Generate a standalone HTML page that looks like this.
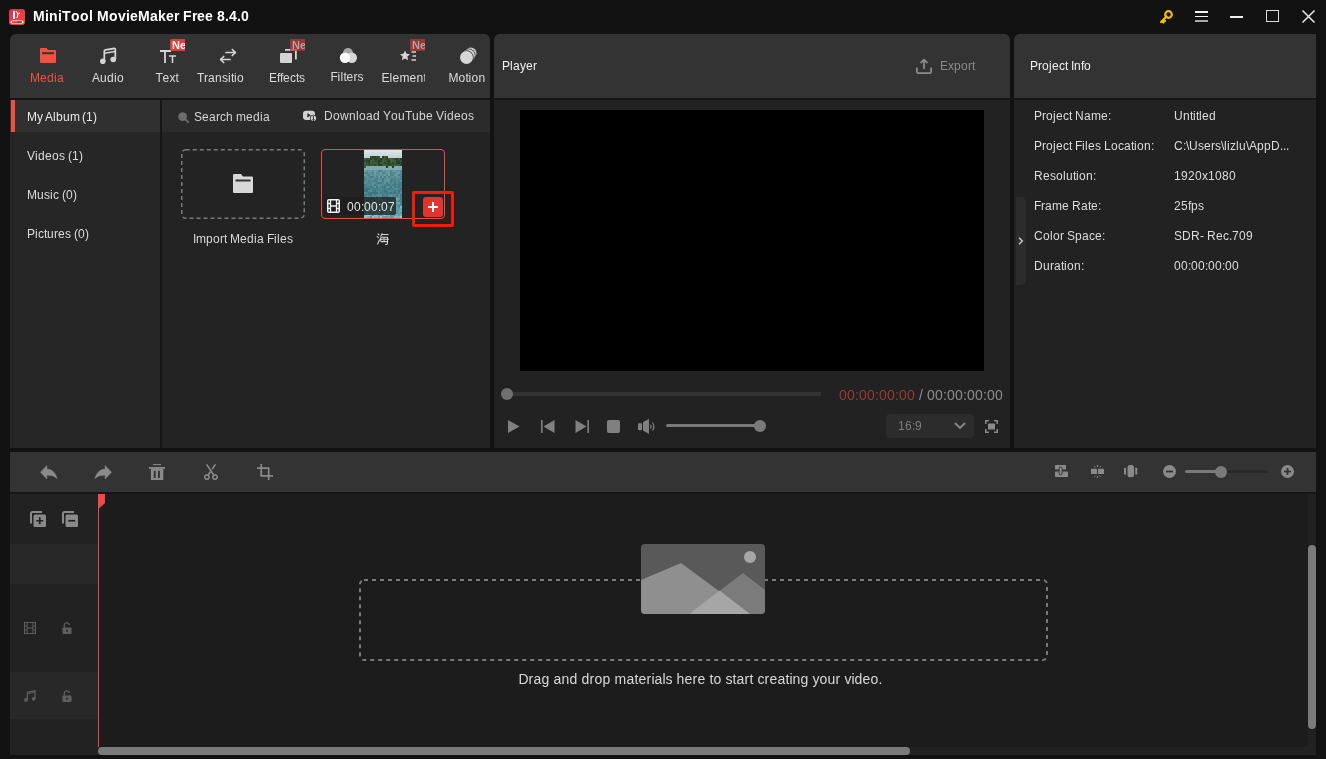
<!DOCTYPE html>
<html><head><meta charset="utf-8">
<style>
*{margin:0;padding:0;box-sizing:border-box}
html,body{width:1326px;height:759px;overflow:hidden;background:#121212;font-family:"Liberation Sans",sans-serif;}
.a{position:absolute}
.t{position:absolute;white-space:nowrap;font-size:12px;line-height:12px;color:#dcdcdc;will-change:transform}
svg{position:absolute;overflow:visible}
.g i{display:inline-block;font-style:normal;text-align:left;overflow:visible}
</style></head><body>
<!-- TITLE BAR -->
<div class="a" style="left:0;top:0;width:1326px;height:34px;background:#121212"></div>
<svg style="left:9px;top:9px" width="16" height="16" viewBox="0 0 16 16">
  <defs><linearGradient id="lg" x1="0" y1="0" x2="1" y2="1"><stop offset="0" stop-color="#e42a5e"/><stop offset="1" stop-color="#e8502a"/></linearGradient></defs>
  <rect x="0" y="0" width="16" height="16" rx="3" fill="url(#lg)"/>
  <rect x="4" y="2" width="2" height="8" fill="#fff"/>
  <path d="M7 2 L9 5 L11 4 M9 5 L8 9" stroke="#fff" stroke-width="1" fill="none"/>
  <rect x="1.5" y="11.5" width="13" height="3" rx="1.5" fill="#fff"/>
  <rect x="3" y="12.3" width="5" height="1.5" fill="#e01818"/>
  <rect x="8" y="12.3" width="5" height="1.5" fill="#333"/>
</svg>
<div class="t g" id="title" style="left:33px;top:9px;font-size:14px;line-height:14px;font-weight:bold;color:#fff;letter-spacing:0.2px"><i style="width:12px">M</i><i style="width:4px">i</i><i style="width:9px">n</i><i style="width:4px">i</i><i style="width:9px">T</i><i style="width:9px">o</i><i style="width:9px">o</i><i style="width:4px">l</i><i style="width:4px">&nbsp;</i><i style="width:12px">M</i><i style="width:9px">o</i><i style="width:8px">v</i><i style="width:4px">i</i><i style="width:8px">e</i><i style="width:12px">M</i><i style="width:8px">a</i><i style="width:8px">k</i><i style="width:8px">e</i><i style="width:5px">r</i><i style="width:4px">&nbsp;</i><i style="width:9px">F</i><i style="width:5px">r</i><i style="width:8px">e</i><i style="width:8px">e</i><i style="width:4px">&nbsp;</i><i style="width:8px">8</i><i style="width:4px">.</i><i style="width:8px">4</i><i style="width:4px">.</i><i style="width:8px">0</i></div>
<!-- key -->
<svg style="left:1160px;top:10px" width="13" height="13" viewBox="0 0 13 13">
  <circle cx="8.5" cy="4.5" r="3.3" fill="none" stroke="#f5bd00" stroke-width="2.2"/>
  <path d="M6.5 6.5 L1 12 M2 11 L3.5 12.5 M3.5 9.5 L5 11" stroke="#f5bd00" stroke-width="2.2" fill="none" stroke-linecap="round"/>
</svg>
<!-- menu -->
<div class="a" style="left:1195px;top:11px;width:13px;height:1.6px;background:#f0f0f0"></div>
<div class="a" style="left:1195px;top:15.6px;width:13px;height:1.7px;background:#f0f0f0"></div>
<div class="a" style="left:1195px;top:20px;width:13px;height:2px;background:#a8a8a8"></div>
<!-- min -->
<div class="a" style="left:1230px;top:16px;width:13px;height:2px;background:#ececec"></div>
<!-- max -->
<div class="a" style="left:1266px;top:10px;width:13px;height:12px;border:1.5px solid #dcdcdc"></div>
<!-- close -->
<svg style="left:1302px;top:10px" width="13" height="13" viewBox="0 0 13 13">
  <path d="M0.5 0.5 L12.5 12.5 M12.5 0.5 L0.5 12.5" stroke="#e8e8e8" stroke-width="1.5"/>
</svg>

<!-- ========== MEDIA PANEL ========== -->
<div class="a" style="left:10px;top:34px;width:480px;height:64px;background:#333333;border-radius:6px 6px 0 0"></div>
<div class="a" style="left:10px;top:98px;width:480px;height:2px;background:#161616"></div>
<div class="a" style="left:10px;top:100px;width:150px;height:348px;background:#262626"></div>
<div class="a" style="left:10px;top:100px;width:150px;height:32px;background:#303030"></div>
<div class="a" style="left:11px;top:100px;width:4px;height:32px;background:#f05040"></div>
<div class="a" style="left:160px;top:100px;width:2px;height:348px;background:#161616"></div>
<div class="a" style="left:162px;top:100px;width:328px;height:348px;background:#232323"></div>
<div class="a" style="left:162px;top:100px;width:328px;height:32px;background:#2b2b2b"></div>

<!-- tabs -->

<!-- Media tab icon -->
<svg style="left:40px;top:48px" width="16" height="15" viewBox="0 0 16 15">
  <path d="M0 1 Q0 0 1 0 H6.5 L8 2 H15 Q16 2 16 3 V14 Q16 15 15 15 H1 Q0 15 0 14 Z" fill="#f25241"/>
  <rect x="2" y="4.2" width="12" height="2" fill="#333"/>
</svg>
<div class="t g" style="left:17px;top:72px;width:60px;text-align:center;color:#f25241"><i style="width:10px">M</i><i style="width:7px">e</i><i style="width:7px">d</i><i style="width:3px">i</i><i style="width:7px">a</i></div>
<!-- Audio -->
<svg style="left:100px;top:48px" width="16" height="16" viewBox="0 0 16 16">
  <path d="M4.3 13 V3.2 Q4.3 2 5.5 1.8 L14 0.5 Q15.3 0.3 15.3 1.6 V11" stroke="#d4d4d4" stroke-width="1.8" fill="none"/>
  <path d="M4.3 5.2 L15.3 3.5" stroke="#d4d4d4" stroke-width="1.6" fill="none"/>
  <circle cx="2.8" cy="13.2" r="2.8" fill="#d4d4d4"/>
  <circle cx="13.2" cy="11.5" r="2.8" fill="#d4d4d4"/>
</svg>
<div class="t g" style="left:78px;top:72px;width:60px;text-align:center"><i style="width:8px">A</i><i style="width:7px">u</i><i style="width:7px">d</i><i style="width:3px">i</i><i style="width:7px">o</i></div>
<!-- Text -->
<svg style="left:160px;top:50px" width="17" height="14" viewBox="0 0 17 14">
  <path d="M0 1 H11 M5 1 V13" stroke="#d4d4d4" stroke-width="1.8" fill="none"/>
  <path d="M9 6 H16 M12.5 6 V13" stroke="#d4d4d4" stroke-width="1.6" fill="none"/>
</svg>
<div class="a" style="left:170px;top:39px;width:15px;height:12px;background:#e33b3b;border-radius:2px 0 0 2px;overflow:hidden">
  <div class="t g" style="left:2px;top:1px;font-size:11px;line-height:11px;font-weight:bold;color:#fff"><i style="width:8px">N</i><i style="width:6px">e</i></div>
</div>
<div class="t g" style="left:137px;top:72px;width:60px;text-align:center"><i style="width:7px">T</i><i style="width:7px">e</i><i style="width:6px">x</i><i style="width:3px">t</i></div>
<!-- Transition -->
<svg style="left:219px;top:48px" width="18" height="16" viewBox="0 0 18 16">
  <path d="M7 4.5 H16.5 M13.3 1.5 L16.5 4.5 L13.3 7.5" stroke="#d4d4d4" stroke-width="1.7" fill="none" stroke-linecap="round" stroke-linejoin="round"/>
  <path d="M11 11.5 H1.5 M4.7 8.5 L1.5 11.5 L4.7 14.5" stroke="#d4d4d4" stroke-width="1.7" fill="none" stroke-linecap="round" stroke-linejoin="round"/>
</svg>
<div class="a" style="left:197px;top:72px;width:47px;height:14px;overflow:hidden">
  <div class="t g" style="left:0;top:0;width:60px;text-align:center"><i style="width:7px">T</i><i style="width:4px">r</i><i style="width:7px">a</i><i style="width:7px">n</i><i style="width:6px">s</i><i style="width:3px">i</i><i style="width:3px">t</i><i style="width:3px">i</i><i style="width:7px">o</i><i style="width:7px">n</i><i style="width:6px">s</i></div>
</div>
<!-- Effects -->
<svg style="left:280px;top:49px" width="17" height="15" viewBox="0 0 17 15">
  <path d="M5 0.9 H15.9 V10.5" stroke="#d4d4d4" stroke-width="1.8" fill="none"/>
  <rect x="0" y="4" width="12" height="10" rx="1" fill="#d4d4d4"/>
</svg>
<div class="a" style="left:290px;top:39px;width:15px;height:12px;background:rgba(200,50,50,0.72);overflow:hidden">
  <div class="t g" style="left:2px;top:1px;font-size:11px;line-height:11px;font-weight:bold;color:#a8a8a8"><i style="width:8px">N</i><i style="width:6px">e</i></div>
</div>
<div class="t g" style="left:257px;top:72px;width:60px;text-align:center"><i style="width:8px">E</i><i style="width:3px">f</i><i style="width:3px">f</i><i style="width:7px">e</i><i style="width:6px">c</i><i style="width:3px">t</i><i style="width:6px">s</i></div>
<!-- Filters -->
<svg style="left:335px;top:42px" width="26" height="26" viewBox="0 0 26 26">
  <circle cx="13" cy="11" r="5" fill="#a6a6a6"/>
  <circle cx="16.8" cy="15.8" r="5.2" fill="#d6d6d6"/>
  <circle cx="10" cy="15.8" r="5.2" fill="#fafafa"/>
</svg>
<div class="t g" style="left:317px;top:71px;width:60px;text-align:center"><i style="width:7px">F</i><i style="width:3px">i</i><i style="width:3px">l</i><i style="width:3px">t</i><i style="width:7px">e</i><i style="width:4px">r</i><i style="width:6px">s</i></div>
<!-- Elements -->
<svg style="left:400px;top:50px" width="17" height="12" viewBox="0 0 17 12">
  <path d="M5 0.5 L6.5 3.8 L10 4.2 L7.4 6.6 L8.1 10.2 L5 8.4 L1.9 10.2 L2.6 6.6 L0 4.2 L3.5 3.8 Z" fill="#d4d4d4"/>
  <path d="M11.5 2 H16 M12.5 6 H16 M11.5 10 H16" stroke="#d4d4d4" stroke-width="1.6"/>
</svg>
<div class="a" style="left:410px;top:39px;width:15px;height:12px;background:rgba(200,50,50,0.72);overflow:hidden">
  <div class="t g" style="left:2px;top:1px;font-size:11px;line-height:11px;font-weight:bold;color:#a8a8a8"><i style="width:8px">N</i><i style="width:6px">e</i></div>
</div>
<div class="a" style="left:377px;top:72px;width:48px;height:14px;overflow:hidden">
  <div class="t g" style="left:0;top:0;width:60px;text-align:center"><i style="width:8px">E</i><i style="width:3px">l</i><i style="width:7px">e</i><i style="width:10px">m</i><i style="width:7px">e</i><i style="width:7px">n</i><i style="width:3px">t</i><i style="width:6px">s</i></div>
</div>
<!-- Motion -->
<svg style="left:455px;top:42px" width="26" height="26" viewBox="0 0 26 26">
  <circle cx="15.7" cy="11.3" r="5.8" fill="#d0d0d0"/>
  <circle cx="13.6" cy="13.4" r="6.9" fill="#333"/>
  <circle cx="13.6" cy="13.4" r="6.2" fill="#d8d8d8"/>
  <circle cx="11.5" cy="15.5" r="7.2" fill="#333"/>
  <circle cx="11.5" cy="15.5" r="6.5" fill="#d6d6d6"/>
</svg>
<div class="t g" style="left:437px;top:72px;width:60px;text-align:center"><i style="width:10px">M</i><i style="width:7px">o</i><i style="width:3px">t</i><i style="width:3px">i</i><i style="width:7px">o</i><i style="width:7px">n</i></div>


<!-- sidebar text -->
<div class="t g" style="left:27px;top:111px;color:#e8e8e8;word-spacing:-1px"><i style="width:10px">M</i><i style="width:6px">y</i><i style="width:2px">&nbsp;</i><i style="width:8px">A</i><i style="width:3px">l</i><i style="width:7px">b</i><i style="width:7px">u</i><i style="width:10px">m</i><i style="width:2px">&nbsp;</i><i style="width:4px">(</i><i style="width:7px">1</i><i style="width:4px">)</i></div>
<div class="t g" style="left:27px;top:150px"><i style="width:8px">V</i><i style="width:3px">i</i><i style="width:7px">d</i><i style="width:7px">e</i><i style="width:7px">o</i><i style="width:6px">s</i><i style="width:3px">&nbsp;</i><i style="width:4px">(</i><i style="width:7px">1</i><i style="width:4px">)</i></div>
<div class="t g" style="left:27px;top:189px"><i style="width:10px">M</i><i style="width:7px">u</i><i style="width:6px">s</i><i style="width:3px">i</i><i style="width:6px">c</i><i style="width:3px">&nbsp;</i><i style="width:4px">(</i><i style="width:7px">0</i><i style="width:4px">)</i></div>
<div class="t g" style="left:27px;top:228px"><i style="width:8px">P</i><i style="width:3px">i</i><i style="width:6px">c</i><i style="width:3px">t</i><i style="width:7px">u</i><i style="width:4px">r</i><i style="width:7px">e</i><i style="width:6px">s</i><i style="width:3px">&nbsp;</i><i style="width:4px">(</i><i style="width:7px">0</i><i style="width:4px">)</i></div>
<!-- search row -->
<svg style="left:178px;top:112px" width="11" height="11" viewBox="0 0 11 11">
  <circle cx="4.6" cy="4.6" r="4.4" fill="#6c6c6c"/>
  <path d="M7.5 7.5 L10.2 10.2" stroke="#6c6c6c" stroke-width="1.8" stroke-linecap="round"/>
</svg>
<div class="t g" style="left:194px;top:111px;color:#d4d4d4"><i style="width:8px">S</i><i style="width:7px">e</i><i style="width:7px">a</i><i style="width:4px">r</i><i style="width:6px">c</i><i style="width:7px">h</i><i style="width:3px">&nbsp;</i><i style="width:10px">m</i><i style="width:7px">e</i><i style="width:7px">d</i><i style="width:3px">i</i><i style="width:7px">a</i></div>
<svg style="left:303px;top:110px" width="15" height="13" viewBox="0 0 15 13">
  <rect x="0" y="0.8" width="12" height="9.2" rx="3.2" fill="#d2d2d2"/>
  <path d="M4.3 3.2 L8 5.3 L4.3 7.4 Z" fill="#2b2b2b"/>
  <circle cx="10.4" cy="8.3" r="3.5" fill="#2b2b2b"/>
  <circle cx="10.4" cy="8.3" r="2.7" fill="#d2d2d2"/>
  <path d="M10.4 6 V10.6 M9.3 9.4 L10.4 10.6 L11.5 9.4" stroke="#2b2b2b" stroke-width="0.9" fill="none"/>
</svg>
<div class="t g" style="left:324px;top:110px;color:#d4d4d4"><i style="width:9px">D</i><i style="width:7px">o</i><i style="width:9px">w</i><i style="width:7px">n</i><i style="width:3px">l</i><i style="width:7px">o</i><i style="width:7px">a</i><i style="width:7px">d</i><i style="width:3px">&nbsp;</i><i style="width:8px">Y</i><i style="width:7px">o</i><i style="width:7px">u</i><i style="width:7px">T</i><i style="width:7px">u</i><i style="width:7px">b</i><i style="width:7px">e</i><i style="width:3px">&nbsp;</i><i style="width:8px">V</i><i style="width:3px">i</i><i style="width:7px">d</i><i style="width:7px">e</i><i style="width:7px">o</i><i style="width:6px">s</i></div>
<!-- import box -->
<svg style="left:181px;top:149px" width="124" height="70" viewBox="0 0 124 70">
  <rect x="0.75" y="0.75" width="122.5" height="68.5" rx="4" fill="none" stroke="#7a7a7a" stroke-width="1.5" stroke-dasharray="4 3"/>
</svg>
<svg style="left:233px;top:174px" width="20" height="19" viewBox="0 0 20 19">
  <path d="M0 1.2 Q0 0 1.2 0 H8 L9.8 2.5 H18.8 Q20 2.5 20 3.7 V17.8 Q20 19 18.8 19 H1.2 Q0 19 0 17.8 Z" fill="#d8d8d8"/>
  <rect x="2.5" y="5.5" width="15" height="2" fill="#333"/>
</svg>
<div class="t g" style="left:181px;top:233px;width:124px;text-align:center;color:#d8d8d8"><i style="width:3px">I</i><i style="width:10px">m</i><i style="width:7px">p</i><i style="width:7px">o</i><i style="width:4px">r</i><i style="width:3px">t</i><i style="width:3px">&nbsp;</i><i style="width:10px">M</i><i style="width:7px">e</i><i style="width:7px">d</i><i style="width:3px">i</i><i style="width:7px">a</i><i style="width:3px">&nbsp;</i><i style="width:7px">F</i><i style="width:3px">i</i><i style="width:3px">l</i><i style="width:7px">e</i><i style="width:6px">s</i></div>
<!-- video thumb -->
<div class="a" style="left:321px;top:149px;width:124px;height:70px;border:1.3px solid #e84c3d;border-radius:4px;background:#232323"></div>
<svg style="left:364px;top:150px" width="38" height="68" viewBox="0 0 38 68" shape-rendering="crispEdges"><rect x="0" y="0" width="2" height="2" fill="#dde4e8"/><rect x="2" y="0" width="2" height="2" fill="#dde4e8"/><rect x="4" y="0" width="2" height="2" fill="#dde4e8"/><rect x="6" y="0" width="2" height="2" fill="#dde4e8"/><rect x="8" y="0" width="2" height="2" fill="#dde4e8"/><rect x="10" y="0" width="2" height="2" fill="#dde4e8"/><rect x="12" y="0" width="2" height="2" fill="#dde4e8"/><rect x="14" y="0" width="2" height="2" fill="#dde4e8"/><rect x="16" y="0" width="2" height="2" fill="#dde4e8"/><rect x="18" y="0" width="2" height="2" fill="#dde4e8"/><rect x="20" y="0" width="2" height="2" fill="#dde4e8"/><rect x="22" y="0" width="2" height="2" fill="#dde4e8"/><rect x="24" y="0" width="2" height="2" fill="#dde4e8"/><rect x="26" y="0" width="2" height="2" fill="#dde4e8"/><rect x="28" y="0" width="2" height="2" fill="#dde4e8"/><rect x="30" y="0" width="2" height="2" fill="#dde4e8"/><rect x="32" y="0" width="2" height="2" fill="#dde4e8"/><rect x="34" y="0" width="2" height="2" fill="#dde4e8"/><rect x="36" y="0" width="2" height="2" fill="#dde4e8"/><rect x="0" y="2" width="2" height="2" fill="#d6dee2"/><rect x="2" y="2" width="2" height="2" fill="#d6dee2"/><rect x="4" y="2" width="2" height="2" fill="#d6dee2"/><rect x="6" y="2" width="2" height="2" fill="#d6dee2"/><rect x="8" y="2" width="2" height="2" fill="#d6dee2"/><rect x="10" y="2" width="2" height="2" fill="#d6dee2"/><rect x="12" y="2" width="2" height="2" fill="#d6dee2"/><rect x="14" y="2" width="2" height="2" fill="#d6dee2"/><rect x="16" y="2" width="2" height="2" fill="#d6dee2"/><rect x="18" y="2" width="2" height="2" fill="#d6dee2"/><rect x="20" y="2" width="2" height="2" fill="#d6dee2"/><rect x="22" y="2" width="2" height="2" fill="#d6dee2"/><rect x="24" y="2" width="2" height="2" fill="#d6dee2"/><rect x="26" y="2" width="2" height="2" fill="#d6dee2"/><rect x="28" y="2" width="2" height="2" fill="#d6dee2"/><rect x="30" y="2" width="2" height="2" fill="#d6dee2"/><rect x="32" y="2" width="2" height="2" fill="#d6dee2"/><rect x="34" y="2" width="2" height="2" fill="#d6dee2"/><rect x="36" y="2" width="2" height="2" fill="#d6dee2"/><rect x="0" y="4" width="2" height="2" fill="#cfd8dc"/><rect x="2" y="4" width="2" height="2" fill="#cfd8dc"/><rect x="4" y="4" width="2" height="2" fill="#cfd8dc"/><rect x="6" y="4" width="2" height="2" fill="#cfd8dc"/><rect x="8" y="4" width="2" height="2" fill="#cfd8dc"/><rect x="10" y="4" width="2" height="2" fill="#cfd8dc"/><rect x="12" y="4" width="2" height="2" fill="#cfd8dc"/><rect x="14" y="4" width="2" height="2" fill="#cfd8dc"/><rect x="16" y="4" width="2" height="2" fill="#cfd8dc"/><rect x="18" y="4" width="2" height="2" fill="#cfd8dc"/><rect x="20" y="4" width="2" height="2" fill="#cfd8dc"/><rect x="22" y="4" width="2" height="2" fill="#cfd8dc"/><rect x="24" y="4" width="2" height="2" fill="#cfd8dc"/><rect x="26" y="4" width="2" height="2" fill="#cfd8dc"/><rect x="28" y="4" width="2" height="2" fill="#cfd8dc"/><rect x="30" y="4" width="2" height="2" fill="#cfd8dc"/><rect x="32" y="4" width="2" height="2" fill="#cfd8dc"/><rect x="34" y="4" width="2" height="2" fill="#cfd8dc"/><rect x="36" y="4" width="2" height="2" fill="#cfd8dc"/><rect x="0" y="6" width="2" height="2" fill="#c8d2d6"/><rect x="2" y="6" width="2" height="2" fill="#c8d2d6"/><rect x="4" y="6" width="2" height="2" fill="#c8d2d6"/><rect x="6" y="6" width="2" height="2" fill="#345032"/><rect x="8" y="6" width="2" height="2" fill="#2c442c"/><rect x="10" y="6" width="2" height="2" fill="#2c442c"/><rect x="12" y="6" width="2" height="2" fill="#345032"/><rect x="14" y="6" width="2" height="2" fill="#345032"/><rect x="16" y="6" width="2" height="2" fill="#c8d2d6"/><rect x="18" y="6" width="2" height="2" fill="#263a28"/><rect x="20" y="6" width="2" height="2" fill="#3c5838"/><rect x="22" y="6" width="2" height="2" fill="#345032"/><rect x="24" y="6" width="2" height="2" fill="#c8d2d6"/><rect x="26" y="6" width="2" height="2" fill="#c8d2d6"/><rect x="28" y="6" width="2" height="2" fill="#c8d2d6"/><rect x="30" y="6" width="2" height="2" fill="#c8d2d6"/><rect x="32" y="6" width="2" height="2" fill="#c8d2d6"/><rect x="34" y="6" width="2" height="2" fill="#c8d2d6"/><rect x="36" y="6" width="2" height="2" fill="#c8d2d6"/><rect x="0" y="8" width="2" height="2" fill="#425e3e"/><rect x="2" y="8" width="2" height="2" fill="#345032"/><rect x="4" y="8" width="2" height="2" fill="#3c5838"/><rect x="6" y="8" width="2" height="2" fill="#2c442c"/><rect x="8" y="8" width="2" height="2" fill="#3c5838"/><rect x="10" y="8" width="2" height="2" fill="#2c442c"/><rect x="12" y="8" width="2" height="2" fill="#2c442c"/><rect x="14" y="8" width="2" height="2" fill="#345032"/><rect x="16" y="8" width="2" height="2" fill="#263a28"/><rect x="18" y="8" width="2" height="2" fill="#3c5838"/><rect x="20" y="8" width="2" height="2" fill="#3c5838"/><rect x="22" y="8" width="2" height="2" fill="#2c442c"/><rect x="24" y="8" width="2" height="2" fill="#3c5838"/><rect x="26" y="8" width="2" height="2" fill="#425e3e"/><rect x="28" y="8" width="2" height="2" fill="#3c5838"/><rect x="30" y="8" width="2" height="2" fill="#345032"/><rect x="32" y="8" width="2" height="2" fill="#2c442c"/><rect x="34" y="8" width="2" height="2" fill="#3c5838"/><rect x="36" y="8" width="2" height="2" fill="#263a28"/><rect x="0" y="10" width="2" height="2" fill="#345032"/><rect x="2" y="10" width="2" height="2" fill="#2c442c"/><rect x="4" y="10" width="2" height="2" fill="#263a28"/><rect x="6" y="10" width="2" height="2" fill="#425e3e"/><rect x="8" y="10" width="2" height="2" fill="#3c5838"/><rect x="10" y="10" width="2" height="2" fill="#345032"/><rect x="12" y="10" width="2" height="2" fill="#345032"/><rect x="14" y="10" width="2" height="2" fill="#263a28"/><rect x="16" y="10" width="2" height="2" fill="#2c442c"/><rect x="18" y="10" width="2" height="2" fill="#425e3e"/><rect x="20" y="10" width="2" height="2" fill="#3c5838"/><rect x="22" y="10" width="2" height="2" fill="#345032"/><rect x="24" y="10" width="2" height="2" fill="#263a28"/><rect x="26" y="10" width="2" height="2" fill="#425e3e"/><rect x="28" y="10" width="2" height="2" fill="#425e3e"/><rect x="30" y="10" width="2" height="2" fill="#425e3e"/><rect x="32" y="10" width="2" height="2" fill="#2c442c"/><rect x="34" y="10" width="2" height="2" fill="#2c442c"/><rect x="36" y="10" width="2" height="2" fill="#345032"/><rect x="0" y="12" width="2" height="2" fill="#425e3e"/><rect x="2" y="12" width="2" height="2" fill="#345032"/><rect x="4" y="12" width="2" height="2" fill="#2c442c"/><rect x="6" y="12" width="2" height="2" fill="#425e3e"/><rect x="8" y="12" width="2" height="2" fill="#345032"/><rect x="10" y="12" width="2" height="2" fill="#425e3e"/><rect x="12" y="12" width="2" height="2" fill="#3c5838"/><rect x="14" y="12" width="2" height="2" fill="#263a28"/><rect x="16" y="12" width="2" height="2" fill="#425e3e"/><rect x="18" y="12" width="2" height="2" fill="#3c5838"/><rect x="20" y="12" width="2" height="2" fill="#2c442c"/><rect x="22" y="12" width="2" height="2" fill="#345032"/><rect x="24" y="12" width="2" height="2" fill="#2c442c"/><rect x="26" y="12" width="2" height="2" fill="#3c5838"/><rect x="28" y="12" width="2" height="2" fill="#2c442c"/><rect x="30" y="12" width="2" height="2" fill="#3c5838"/><rect x="32" y="12" width="2" height="2" fill="#263a28"/><rect x="34" y="12" width="2" height="2" fill="#263a28"/><rect x="36" y="12" width="2" height="2" fill="#2c442c"/><rect x="0" y="14" width="2" height="2" fill="#425e3e"/><rect x="2" y="14" width="2" height="2" fill="#3c5838"/><rect x="4" y="14" width="2" height="2" fill="#345032"/><rect x="6" y="14" width="2" height="2" fill="#345032"/><rect x="8" y="14" width="2" height="2" fill="#3c5838"/><rect x="10" y="14" width="2" height="2" fill="#2c442c"/><rect x="12" y="14" width="2" height="2" fill="#3c5838"/><rect x="14" y="14" width="2" height="2" fill="#2c442c"/><rect x="16" y="14" width="2" height="2" fill="#263a28"/><rect x="18" y="14" width="2" height="2" fill="#3c5838"/><rect x="20" y="14" width="2" height="2" fill="#425e3e"/><rect x="22" y="14" width="2" height="2" fill="#345032"/><rect x="24" y="14" width="2" height="2" fill="#2c442c"/><rect x="26" y="14" width="2" height="2" fill="#345032"/><rect x="28" y="14" width="2" height="2" fill="#345032"/><rect x="30" y="14" width="2" height="2" fill="#3c5838"/><rect x="32" y="14" width="2" height="2" fill="#3c5838"/><rect x="34" y="14" width="2" height="2" fill="#3c5838"/><rect x="36" y="14" width="2" height="2" fill="#2c442c"/><rect x="0" y="16" width="2" height="2" fill="#3c5838"/><rect x="2" y="16" width="2" height="2" fill="#82aaaf"/><rect x="4" y="16" width="2" height="2" fill="#82aaaf"/><rect x="6" y="16" width="2" height="2" fill="#82aaaf"/><rect x="8" y="16" width="2" height="2" fill="#82aaaf"/><rect x="10" y="16" width="2" height="2" fill="#82aaaf"/><rect x="12" y="16" width="2" height="2" fill="#82aaaf"/><rect x="14" y="16" width="2" height="2" fill="#82aaaf"/><rect x="16" y="16" width="2" height="2" fill="#82aaaf"/><rect x="18" y="16" width="2" height="2" fill="#82aaaf"/><rect x="20" y="16" width="2" height="2" fill="#82aaaf"/><rect x="22" y="16" width="2" height="2" fill="#263a28"/><rect x="24" y="16" width="2" height="2" fill="#82aaaf"/><rect x="26" y="16" width="2" height="2" fill="#82aaaf"/><rect x="28" y="16" width="2" height="2" fill="#2c442c"/><rect x="30" y="16" width="2" height="2" fill="#82aaaf"/><rect x="32" y="16" width="2" height="2" fill="#82aaaf"/><rect x="34" y="16" width="2" height="2" fill="#82aaaf"/><rect x="36" y="16" width="2" height="2" fill="#82aaaf"/><rect x="0" y="18" width="2" height="2" fill="#82aaaf"/><rect x="2" y="18" width="2" height="2" fill="#82aaaf"/><rect x="4" y="18" width="2" height="2" fill="#82aaaf"/><rect x="6" y="18" width="2" height="2" fill="#82aaaf"/><rect x="8" y="18" width="2" height="2" fill="#82aaaf"/><rect x="10" y="18" width="2" height="2" fill="#82aaaf"/><rect x="12" y="18" width="2" height="2" fill="#82aaaf"/><rect x="14" y="18" width="2" height="2" fill="#82aaaf"/><rect x="16" y="18" width="2" height="2" fill="#82aaaf"/><rect x="18" y="18" width="2" height="2" fill="#82aaaf"/><rect x="20" y="18" width="2" height="2" fill="#82aaaf"/><rect x="22" y="18" width="2" height="2" fill="#82aaaf"/><rect x="24" y="18" width="2" height="2" fill="#82aaaf"/><rect x="26" y="18" width="2" height="2" fill="#82aaaf"/><rect x="28" y="18" width="2" height="2" fill="#82aaaf"/><rect x="30" y="18" width="2" height="2" fill="#82aaaf"/><rect x="32" y="18" width="2" height="2" fill="#82aaaf"/><rect x="34" y="18" width="2" height="2" fill="#82aaaf"/><rect x="36" y="18" width="2" height="2" fill="#82aaaf"/><rect x="0" y="20" width="2" height="2" fill="#6da0a9"/><rect x="2" y="20" width="2" height="2" fill="#62959e"/><rect x="4" y="20" width="2" height="2" fill="#6a9da6"/><rect x="6" y="20" width="2" height="2" fill="#679aa3"/><rect x="8" y="20" width="2" height="2" fill="#5e919a"/><rect x="10" y="20" width="2" height="2" fill="#689ba4"/><rect x="12" y="20" width="2" height="2" fill="#63969f"/><rect x="14" y="20" width="2" height="2" fill="#4e818a"/><rect x="16" y="20" width="2" height="2" fill="#51848d"/><rect x="18" y="20" width="2" height="2" fill="#62959e"/><rect x="20" y="20" width="2" height="2" fill="#5d9099"/><rect x="22" y="20" width="2" height="2" fill="#6598a1"/><rect x="24" y="20" width="2" height="2" fill="#63969f"/><rect x="26" y="20" width="2" height="2" fill="#568992"/><rect x="28" y="20" width="2" height="2" fill="#6598a1"/><rect x="30" y="20" width="2" height="2" fill="#6da0a9"/><rect x="32" y="20" width="2" height="2" fill="#5d9099"/><rect x="34" y="20" width="2" height="2" fill="#61949d"/><rect x="36" y="20" width="2" height="2" fill="#52858e"/><rect x="0" y="22" width="2" height="2" fill="#558991"/><rect x="2" y="22" width="2" height="2" fill="#4d8189"/><rect x="4" y="22" width="2" height="2" fill="#62969e"/><rect x="6" y="22" width="2" height="2" fill="#5c9098"/><rect x="8" y="22" width="2" height="2" fill="#4f838b"/><rect x="10" y="22" width="2" height="2" fill="#6b9fa7"/><rect x="12" y="22" width="2" height="2" fill="#5a8e96"/><rect x="14" y="22" width="2" height="2" fill="#5a8e96"/><rect x="16" y="22" width="2" height="2" fill="#6a9ea6"/><rect x="18" y="22" width="2" height="2" fill="#50848c"/><rect x="20" y="22" width="2" height="2" fill="#50848c"/><rect x="22" y="22" width="2" height="2" fill="#689ca4"/><rect x="24" y="22" width="2" height="2" fill="#689ca4"/><rect x="26" y="22" width="2" height="2" fill="#4c8088"/><rect x="28" y="22" width="2" height="2" fill="#558991"/><rect x="30" y="22" width="2" height="2" fill="#568a92"/><rect x="32" y="22" width="2" height="2" fill="#6498a0"/><rect x="34" y="22" width="2" height="2" fill="#699da5"/><rect x="36" y="22" width="2" height="2" fill="#558991"/><rect x="0" y="24" width="2" height="2" fill="#699da6"/><rect x="2" y="24" width="2" height="2" fill="#578b94"/><rect x="4" y="24" width="2" height="2" fill="#4d818a"/><rect x="6" y="24" width="2" height="2" fill="#679ba4"/><rect x="8" y="24" width="2" height="2" fill="#5a8e97"/><rect x="10" y="24" width="2" height="2" fill="#689ca5"/><rect x="12" y="24" width="2" height="2" fill="#5e929b"/><rect x="14" y="24" width="2" height="2" fill="#5b8f98"/><rect x="16" y="24" width="2" height="2" fill="#61959e"/><rect x="18" y="24" width="2" height="2" fill="#5e929b"/><rect x="20" y="24" width="2" height="2" fill="#679ba4"/><rect x="22" y="24" width="2" height="2" fill="#548891"/><rect x="24" y="24" width="2" height="2" fill="#699da6"/><rect x="26" y="24" width="2" height="2" fill="#538790"/><rect x="28" y="24" width="2" height="2" fill="#4f838c"/><rect x="30" y="24" width="2" height="2" fill="#669aa3"/><rect x="32" y="24" width="2" height="2" fill="#679ba4"/><rect x="34" y="24" width="2" height="2" fill="#4e828b"/><rect x="36" y="24" width="2" height="2" fill="#548891"/><rect x="0" y="26" width="2" height="2" fill="#50848d"/><rect x="2" y="26" width="2" height="2" fill="#5f939c"/><rect x="4" y="26" width="2" height="2" fill="#588c95"/><rect x="6" y="26" width="2" height="2" fill="#497d86"/><rect x="8" y="26" width="2" height="2" fill="#4c8089"/><rect x="10" y="26" width="2" height="2" fill="#6397a0"/><rect x="12" y="26" width="2" height="2" fill="#4f838c"/><rect x="14" y="26" width="2" height="2" fill="#669aa3"/><rect x="16" y="26" width="2" height="2" fill="#487c85"/><rect x="18" y="26" width="2" height="2" fill="#6498a1"/><rect x="20" y="26" width="2" height="2" fill="#487c85"/><rect x="22" y="26" width="2" height="2" fill="#62969f"/><rect x="24" y="26" width="2" height="2" fill="#4f838c"/><rect x="26" y="26" width="2" height="2" fill="#588c95"/><rect x="28" y="26" width="2" height="2" fill="#5f939c"/><rect x="30" y="26" width="2" height="2" fill="#568a93"/><rect x="32" y="26" width="2" height="2" fill="#61959e"/><rect x="34" y="26" width="2" height="2" fill="#5c9099"/><rect x="36" y="26" width="2" height="2" fill="#50848d"/><rect x="0" y="28" width="2" height="2" fill="#497e87"/><rect x="2" y="28" width="2" height="2" fill="#588d96"/><rect x="4" y="28" width="2" height="2" fill="#598e97"/><rect x="6" y="28" width="2" height="2" fill="#548992"/><rect x="8" y="28" width="2" height="2" fill="#6297a0"/><rect x="10" y="28" width="2" height="2" fill="#4d828b"/><rect x="12" y="28" width="2" height="2" fill="#4f848d"/><rect x="14" y="28" width="2" height="2" fill="#5b9099"/><rect x="16" y="28" width="2" height="2" fill="#5b9099"/><rect x="18" y="28" width="2" height="2" fill="#477c85"/><rect x="20" y="28" width="2" height="2" fill="#5b9099"/><rect x="22" y="28" width="2" height="2" fill="#5d929b"/><rect x="24" y="28" width="2" height="2" fill="#659aa3"/><rect x="26" y="28" width="2" height="2" fill="#4d828b"/><rect x="28" y="28" width="2" height="2" fill="#4f848d"/><rect x="30" y="28" width="2" height="2" fill="#4b8089"/><rect x="32" y="28" width="2" height="2" fill="#5b9099"/><rect x="34" y="28" width="2" height="2" fill="#528790"/><rect x="36" y="28" width="2" height="2" fill="#4a7f88"/><rect x="0" y="30" width="2" height="2" fill="#4f858e"/><rect x="2" y="30" width="2" height="2" fill="#5a9099"/><rect x="4" y="30" width="2" height="2" fill="#4d838c"/><rect x="6" y="30" width="2" height="2" fill="#5a9099"/><rect x="8" y="30" width="2" height="2" fill="#4f858e"/><rect x="10" y="30" width="2" height="2" fill="#487e87"/><rect x="12" y="30" width="2" height="2" fill="#4e848d"/><rect x="14" y="30" width="2" height="2" fill="#6197a0"/><rect x="16" y="30" width="2" height="2" fill="#5d939c"/><rect x="18" y="30" width="2" height="2" fill="#447a83"/><rect x="20" y="30" width="2" height="2" fill="#60969f"/><rect x="22" y="30" width="2" height="2" fill="#5f959e"/><rect x="24" y="30" width="2" height="2" fill="#5c929b"/><rect x="26" y="30" width="2" height="2" fill="#447a83"/><rect x="28" y="30" width="2" height="2" fill="#4b818a"/><rect x="30" y="30" width="2" height="2" fill="#4d838c"/><rect x="32" y="30" width="2" height="2" fill="#568c95"/><rect x="34" y="30" width="2" height="2" fill="#4d838c"/><rect x="36" y="30" width="2" height="2" fill="#5b919a"/><rect x="0" y="32" width="2" height="2" fill="#5f959e"/><rect x="2" y="32" width="2" height="2" fill="#50868f"/><rect x="4" y="32" width="2" height="2" fill="#4d838c"/><rect x="6" y="32" width="2" height="2" fill="#50868f"/><rect x="8" y="32" width="2" height="2" fill="#5a9099"/><rect x="10" y="32" width="2" height="2" fill="#598f98"/><rect x="12" y="32" width="2" height="2" fill="#4b818a"/><rect x="14" y="32" width="2" height="2" fill="#437982"/><rect x="16" y="32" width="2" height="2" fill="#487e87"/><rect x="18" y="32" width="2" height="2" fill="#528891"/><rect x="20" y="32" width="2" height="2" fill="#5d939c"/><rect x="22" y="32" width="2" height="2" fill="#437982"/><rect x="24" y="32" width="2" height="2" fill="#578d96"/><rect x="26" y="32" width="2" height="2" fill="#4e848d"/><rect x="28" y="32" width="2" height="2" fill="#588e97"/><rect x="30" y="32" width="2" height="2" fill="#447a83"/><rect x="32" y="32" width="2" height="2" fill="#538992"/><rect x="34" y="32" width="2" height="2" fill="#477d86"/><rect x="36" y="32" width="2" height="2" fill="#457b84"/><rect x="0" y="34" width="2" height="2" fill="#497f89"/><rect x="2" y="34" width="2" height="2" fill="#4f858f"/><rect x="4" y="34" width="2" height="2" fill="#538993"/><rect x="6" y="34" width="2" height="2" fill="#4e848e"/><rect x="8" y="34" width="2" height="2" fill="#5c929c"/><rect x="10" y="34" width="2" height="2" fill="#427882"/><rect x="12" y="34" width="2" height="2" fill="#518791"/><rect x="14" y="34" width="2" height="2" fill="#5a909a"/><rect x="16" y="34" width="2" height="2" fill="#578d97"/><rect x="18" y="34" width="2" height="2" fill="#528892"/><rect x="20" y="34" width="2" height="2" fill="#4a808a"/><rect x="22" y="34" width="2" height="2" fill="#477d87"/><rect x="24" y="34" width="2" height="2" fill="#457b85"/><rect x="26" y="34" width="2" height="2" fill="#548a94"/><rect x="28" y="34" width="2" height="2" fill="#457b85"/><rect x="30" y="34" width="2" height="2" fill="#417781"/><rect x="32" y="34" width="2" height="2" fill="#508690"/><rect x="34" y="34" width="2" height="2" fill="#447a84"/><rect x="36" y="34" width="2" height="2" fill="#487e88"/><rect x="0" y="36" width="2" height="2" fill="#467d86"/><rect x="2" y="36" width="2" height="2" fill="#4a818a"/><rect x="4" y="36" width="2" height="2" fill="#487f88"/><rect x="6" y="36" width="2" height="2" fill="#437a83"/><rect x="8" y="36" width="2" height="2" fill="#4a818a"/><rect x="10" y="36" width="2" height="2" fill="#599099"/><rect x="12" y="36" width="2" height="2" fill="#3d747d"/><rect x="14" y="36" width="2" height="2" fill="#5a919a"/><rect x="16" y="36" width="2" height="2" fill="#487f88"/><rect x="18" y="36" width="2" height="2" fill="#467d86"/><rect x="20" y="36" width="2" height="2" fill="#407780"/><rect x="22" y="36" width="2" height="2" fill="#5b929b"/><rect x="24" y="36" width="2" height="2" fill="#5b929b"/><rect x="26" y="36" width="2" height="2" fill="#3e757e"/><rect x="28" y="36" width="2" height="2" fill="#599099"/><rect x="30" y="36" width="2" height="2" fill="#427982"/><rect x="32" y="36" width="2" height="2" fill="#498089"/><rect x="34" y="36" width="2" height="2" fill="#427982"/><rect x="36" y="36" width="2" height="2" fill="#4d848d"/><rect x="0" y="38" width="2" height="2" fill="#427983"/><rect x="2" y="38" width="2" height="2" fill="#3c737d"/><rect x="4" y="38" width="2" height="2" fill="#3c737d"/><rect x="6" y="38" width="2" height="2" fill="#4e858f"/><rect x="8" y="38" width="2" height="2" fill="#447b85"/><rect x="10" y="38" width="2" height="2" fill="#487f89"/><rect x="12" y="38" width="2" height="2" fill="#49808a"/><rect x="14" y="38" width="2" height="2" fill="#4a818b"/><rect x="16" y="38" width="2" height="2" fill="#538a94"/><rect x="18" y="38" width="2" height="2" fill="#4a818b"/><rect x="20" y="38" width="2" height="2" fill="#487f89"/><rect x="22" y="38" width="2" height="2" fill="#4b828c"/><rect x="24" y="38" width="2" height="2" fill="#3d747e"/><rect x="26" y="38" width="2" height="2" fill="#4b828c"/><rect x="28" y="38" width="2" height="2" fill="#477e88"/><rect x="30" y="38" width="2" height="2" fill="#568d97"/><rect x="32" y="38" width="2" height="2" fill="#558c96"/><rect x="34" y="38" width="2" height="2" fill="#4a818b"/><rect x="36" y="38" width="2" height="2" fill="#407781"/><rect x="0" y="40" width="2" height="2" fill="#3b727c"/><rect x="2" y="40" width="2" height="2" fill="#3e757f"/><rect x="4" y="40" width="2" height="2" fill="#538a94"/><rect x="6" y="40" width="2" height="2" fill="#568d97"/><rect x="8" y="40" width="2" height="2" fill="#49808a"/><rect x="10" y="40" width="2" height="2" fill="#3e757f"/><rect x="12" y="40" width="2" height="2" fill="#4e858f"/><rect x="14" y="40" width="2" height="2" fill="#528993"/><rect x="16" y="40" width="2" height="2" fill="#4d848e"/><rect x="18" y="40" width="2" height="2" fill="#4a818b"/><rect x="20" y="40" width="2" height="2" fill="#3c737d"/><rect x="22" y="40" width="2" height="2" fill="#457c86"/><rect x="24" y="40" width="2" height="2" fill="#588f99"/><rect x="26" y="40" width="2" height="2" fill="#518892"/><rect x="28" y="40" width="2" height="2" fill="#508791"/><rect x="30" y="40" width="2" height="2" fill="#417882"/><rect x="32" y="40" width="2" height="2" fill="#4b828c"/><rect x="34" y="40" width="2" height="2" fill="#39707a"/><rect x="36" y="40" width="2" height="2" fill="#4c838d"/><rect x="0" y="42" width="2" height="2" fill="#558d97"/><rect x="2" y="42" width="2" height="2" fill="#4d858f"/><rect x="4" y="42" width="2" height="2" fill="#447c86"/><rect x="6" y="42" width="2" height="2" fill="#407882"/><rect x="8" y="42" width="2" height="2" fill="#3f7781"/><rect x="10" y="42" width="2" height="2" fill="#3d757f"/><rect x="12" y="42" width="2" height="2" fill="#3d757f"/><rect x="14" y="42" width="2" height="2" fill="#548c96"/><rect x="16" y="42" width="2" height="2" fill="#417983"/><rect x="18" y="42" width="2" height="2" fill="#4a828c"/><rect x="20" y="42" width="2" height="2" fill="#477f89"/><rect x="22" y="42" width="2" height="2" fill="#407882"/><rect x="24" y="42" width="2" height="2" fill="#4a828c"/><rect x="26" y="42" width="2" height="2" fill="#3a727c"/><rect x="28" y="42" width="2" height="2" fill="#4a828c"/><rect x="30" y="42" width="2" height="2" fill="#3f7781"/><rect x="32" y="42" width="2" height="2" fill="#4d858f"/><rect x="34" y="42" width="2" height="2" fill="#427a84"/><rect x="36" y="42" width="2" height="2" fill="#558d97"/><rect x="0" y="44" width="2" height="2" fill="#3b747e"/><rect x="2" y="44" width="2" height="2" fill="#49828c"/><rect x="4" y="44" width="2" height="2" fill="#427b85"/><rect x="6" y="44" width="2" height="2" fill="#3c757f"/><rect x="8" y="44" width="2" height="2" fill="#518a94"/><rect x="10" y="44" width="2" height="2" fill="#437c86"/><rect x="12" y="44" width="2" height="2" fill="#548d97"/><rect x="14" y="44" width="2" height="2" fill="#4f8892"/><rect x="16" y="44" width="2" height="2" fill="#57909a"/><rect x="18" y="44" width="2" height="2" fill="#427b85"/><rect x="20" y="44" width="2" height="2" fill="#528b95"/><rect x="22" y="44" width="2" height="2" fill="#457e88"/><rect x="24" y="44" width="2" height="2" fill="#4f8892"/><rect x="26" y="44" width="2" height="2" fill="#5a939d"/><rect x="28" y="44" width="2" height="2" fill="#518a94"/><rect x="30" y="44" width="2" height="2" fill="#528b95"/><rect x="32" y="44" width="2" height="2" fill="#417a84"/><rect x="34" y="44" width="2" height="2" fill="#58919b"/><rect x="36" y="44" width="2" height="2" fill="#3e7781"/><rect x="0" y="46" width="2" height="2" fill="#417c85"/><rect x="2" y="46" width="2" height="2" fill="#538e97"/><rect x="4" y="46" width="2" height="2" fill="#548f98"/><rect x="6" y="46" width="2" height="2" fill="#48838c"/><rect x="8" y="46" width="2" height="2" fill="#59949d"/><rect x="10" y="46" width="2" height="2" fill="#5a959e"/><rect x="12" y="46" width="2" height="2" fill="#437e87"/><rect x="14" y="46" width="2" height="2" fill="#58939c"/><rect x="16" y="46" width="2" height="2" fill="#57929b"/><rect x="18" y="46" width="2" height="2" fill="#407b84"/><rect x="20" y="46" width="2" height="2" fill="#437e87"/><rect x="22" y="46" width="2" height="2" fill="#3d7881"/><rect x="24" y="46" width="2" height="2" fill="#538e97"/><rect x="26" y="46" width="2" height="2" fill="#5b969f"/><rect x="28" y="46" width="2" height="2" fill="#508b94"/><rect x="30" y="46" width="2" height="2" fill="#4a858e"/><rect x="32" y="46" width="2" height="2" fill="#538e97"/><rect x="34" y="46" width="2" height="2" fill="#58939c"/><rect x="36" y="46" width="2" height="2" fill="#427d86"/><rect x="0" y="48" width="2" height="2" fill="#57939c"/><rect x="2" y="48" width="2" height="2" fill="#4e8a93"/><rect x="4" y="48" width="2" height="2" fill="#4a868f"/><rect x="6" y="48" width="2" height="2" fill="#48848d"/><rect x="8" y="48" width="2" height="2" fill="#427e87"/><rect x="10" y="48" width="2" height="2" fill="#55919a"/><rect x="12" y="48" width="2" height="2" fill="#4b8790"/><rect x="14" y="48" width="2" height="2" fill="#79b5be"/><rect x="16" y="48" width="2" height="2" fill="#5b97a0"/><rect x="18" y="48" width="2" height="2" fill="#46828b"/><rect x="20" y="48" width="2" height="2" fill="#57939c"/><rect x="22" y="48" width="2" height="2" fill="#437f88"/><rect x="24" y="48" width="2" height="2" fill="#448089"/><rect x="26" y="48" width="2" height="2" fill="#437f88"/><rect x="28" y="48" width="2" height="2" fill="#45818a"/><rect x="30" y="48" width="2" height="2" fill="#619da6"/><rect x="32" y="48" width="2" height="2" fill="#6da9b2"/><rect x="34" y="48" width="2" height="2" fill="#5e9aa3"/><rect x="36" y="48" width="2" height="2" fill="#427e87"/><rect x="0" y="50" width="2" height="2" fill="#58959e"/><rect x="2" y="50" width="2" height="2" fill="#44818a"/><rect x="4" y="50" width="2" height="2" fill="#4d8a93"/><rect x="6" y="50" width="2" height="2" fill="#55929b"/><rect x="8" y="50" width="2" height="2" fill="#4d8a93"/><rect x="10" y="50" width="2" height="2" fill="#539099"/><rect x="12" y="50" width="2" height="2" fill="#58959e"/><rect x="14" y="50" width="2" height="2" fill="#5c99a2"/><rect x="16" y="50" width="2" height="2" fill="#4b8891"/><rect x="18" y="50" width="2" height="2" fill="#5a97a0"/><rect x="20" y="50" width="2" height="2" fill="#4e8b94"/><rect x="22" y="50" width="2" height="2" fill="#56939c"/><rect x="24" y="50" width="2" height="2" fill="#59969f"/><rect x="26" y="50" width="2" height="2" fill="#427f88"/><rect x="28" y="50" width="2" height="2" fill="#5f9ca5"/><rect x="30" y="50" width="2" height="2" fill="#528f98"/><rect x="32" y="50" width="2" height="2" fill="#5b98a1"/><rect x="34" y="50" width="2" height="2" fill="#47848d"/><rect x="36" y="50" width="2" height="2" fill="#44818a"/><rect x="0" y="52" width="2" height="2" fill="#4b8992"/><rect x="2" y="52" width="2" height="2" fill="#508e97"/><rect x="4" y="52" width="2" height="2" fill="#4a8891"/><rect x="6" y="52" width="2" height="2" fill="#4a8891"/><rect x="8" y="52" width="2" height="2" fill="#47858e"/><rect x="10" y="52" width="2" height="2" fill="#529099"/><rect x="12" y="52" width="2" height="2" fill="#4e8c95"/><rect x="14" y="52" width="2" height="2" fill="#518f98"/><rect x="16" y="52" width="2" height="2" fill="#5d9ba4"/><rect x="18" y="52" width="2" height="2" fill="#4f8d96"/><rect x="20" y="52" width="2" height="2" fill="#43818a"/><rect x="22" y="52" width="2" height="2" fill="#4c8a93"/><rect x="24" y="52" width="2" height="2" fill="#58969f"/><rect x="26" y="52" width="2" height="2" fill="#44828b"/><rect x="28" y="52" width="2" height="2" fill="#47858e"/><rect x="30" y="52" width="2" height="2" fill="#43818a"/><rect x="32" y="52" width="2" height="2" fill="#64a2ab"/><rect x="34" y="52" width="2" height="2" fill="#6caab3"/><rect x="36" y="52" width="2" height="2" fill="#48868f"/><rect x="0" y="54" width="2" height="2" fill="#5b9aa2"/><rect x="2" y="54" width="2" height="2" fill="#4c8b93"/><rect x="4" y="54" width="2" height="2" fill="#54939b"/><rect x="6" y="54" width="2" height="2" fill="#6baab2"/><rect x="8" y="54" width="2" height="2" fill="#72b1b9"/><rect x="10" y="54" width="2" height="2" fill="#57969e"/><rect x="12" y="54" width="2" height="2" fill="#54939b"/><rect x="14" y="54" width="2" height="2" fill="#519098"/><rect x="16" y="54" width="2" height="2" fill="#5a99a1"/><rect x="18" y="54" width="2" height="2" fill="#5b9aa2"/><rect x="20" y="54" width="2" height="2" fill="#56959d"/><rect x="22" y="54" width="2" height="2" fill="#5c9ba3"/><rect x="24" y="54" width="2" height="2" fill="#519098"/><rect x="26" y="54" width="2" height="2" fill="#4c8b93"/><rect x="28" y="54" width="2" height="2" fill="#609fa7"/><rect x="30" y="54" width="2" height="2" fill="#56959d"/><rect x="32" y="54" width="2" height="2" fill="#5a99a1"/><rect x="34" y="54" width="2" height="2" fill="#4f8e96"/><rect x="36" y="54" width="2" height="2" fill="#47868e"/><rect x="0" y="56" width="2" height="2" fill="#498990"/><rect x="2" y="56" width="2" height="2" fill="#65a5ac"/><rect x="4" y="56" width="2" height="2" fill="#65a5ac"/><rect x="6" y="56" width="2" height="2" fill="#5e9ea5"/><rect x="8" y="56" width="2" height="2" fill="#5d9da4"/><rect x="10" y="56" width="2" height="2" fill="#6babb2"/><rect x="12" y="56" width="2" height="2" fill="#5c9ca3"/><rect x="14" y="56" width="2" height="2" fill="#5999a0"/><rect x="16" y="56" width="2" height="2" fill="#529299"/><rect x="18" y="56" width="2" height="2" fill="#498990"/><rect x="20" y="56" width="2" height="2" fill="#61a1a8"/><rect x="22" y="56" width="2" height="2" fill="#48888f"/><rect x="24" y="56" width="2" height="2" fill="#67a7ae"/><rect x="26" y="56" width="2" height="2" fill="#5c9ca3"/><rect x="28" y="56" width="2" height="2" fill="#48888f"/><rect x="30" y="56" width="2" height="2" fill="#4a8a91"/><rect x="32" y="56" width="2" height="2" fill="#5f9fa6"/><rect x="34" y="56" width="2" height="2" fill="#498990"/><rect x="36" y="56" width="2" height="2" fill="#7dbdc4"/><rect x="0" y="58" width="2" height="2" fill="#5899a0"/><rect x="2" y="58" width="2" height="2" fill="#7ebfc6"/><rect x="4" y="58" width="2" height="2" fill="#82c3ca"/><rect x="6" y="58" width="2" height="2" fill="#4f9097"/><rect x="8" y="58" width="2" height="2" fill="#55969d"/><rect x="10" y="58" width="2" height="2" fill="#4e8f96"/><rect x="12" y="58" width="2" height="2" fill="#5e9fa6"/><rect x="14" y="58" width="2" height="2" fill="#68a9b0"/><rect x="16" y="58" width="2" height="2" fill="#4b8c93"/><rect x="18" y="58" width="2" height="2" fill="#54959c"/><rect x="20" y="58" width="2" height="2" fill="#5d9ea5"/><rect x="22" y="58" width="2" height="2" fill="#56979e"/><rect x="24" y="58" width="2" height="2" fill="#63a4ab"/><rect x="26" y="58" width="2" height="2" fill="#57989f"/><rect x="28" y="58" width="2" height="2" fill="#4b8c93"/><rect x="30" y="58" width="2" height="2" fill="#5c9da4"/><rect x="32" y="58" width="2" height="2" fill="#5fa0a7"/><rect x="34" y="58" width="2" height="2" fill="#5b9ca3"/><rect x="36" y="58" width="2" height="2" fill="#67a8af"/><rect x="0" y="60" width="2" height="2" fill="#5a9ca3"/><rect x="2" y="60" width="2" height="2" fill="#65a7ae"/><rect x="4" y="60" width="2" height="2" fill="#64a6ad"/><rect x="6" y="60" width="2" height="2" fill="#68aab1"/><rect x="8" y="60" width="2" height="2" fill="#70b2b9"/><rect x="10" y="60" width="2" height="2" fill="#5799a0"/><rect x="12" y="60" width="2" height="2" fill="#6eb0b7"/><rect x="14" y="60" width="2" height="2" fill="#4f9198"/><rect x="16" y="60" width="2" height="2" fill="#5fa1a8"/><rect x="18" y="60" width="2" height="2" fill="#4d8f96"/><rect x="20" y="60" width="2" height="2" fill="#5ea0a7"/><rect x="22" y="60" width="2" height="2" fill="#6aacb3"/><rect x="24" y="60" width="2" height="2" fill="#72b4bb"/><rect x="26" y="60" width="2" height="2" fill="#6caeb5"/><rect x="28" y="60" width="2" height="2" fill="#5a9ca3"/><rect x="30" y="60" width="2" height="2" fill="#5fa1a8"/><rect x="32" y="60" width="2" height="2" fill="#54969d"/><rect x="34" y="60" width="2" height="2" fill="#61a3aa"/><rect x="36" y="60" width="2" height="2" fill="#6aacb3"/><rect x="0" y="62" width="2" height="2" fill="#5699a0"/><rect x="2" y="62" width="2" height="2" fill="#86c9d0"/><rect x="4" y="62" width="2" height="2" fill="#62a5ac"/><rect x="6" y="62" width="2" height="2" fill="#66a9b0"/><rect x="8" y="62" width="2" height="2" fill="#60a3aa"/><rect x="10" y="62" width="2" height="2" fill="#74b7be"/><rect x="12" y="62" width="2" height="2" fill="#73b6bd"/><rect x="14" y="62" width="2" height="2" fill="#82c5cc"/><rect x="16" y="62" width="2" height="2" fill="#55989f"/><rect x="18" y="62" width="2" height="2" fill="#52959c"/><rect x="20" y="62" width="2" height="2" fill="#68abb2"/><rect x="22" y="62" width="2" height="2" fill="#68abb2"/><rect x="24" y="62" width="2" height="2" fill="#73b6bd"/><rect x="26" y="62" width="2" height="2" fill="#52959c"/><rect x="28" y="62" width="2" height="2" fill="#52959c"/><rect x="30" y="62" width="2" height="2" fill="#53969d"/><rect x="32" y="62" width="2" height="2" fill="#51949b"/><rect x="34" y="62" width="2" height="2" fill="#63a6ad"/><rect x="36" y="62" width="2" height="2" fill="#5699a0"/><rect x="0" y="64" width="2" height="2" fill="#6fb4ba"/><rect x="2" y="64" width="2" height="2" fill="#8acfd5"/><rect x="4" y="64" width="2" height="2" fill="#8dd2d8"/><rect x="6" y="64" width="2" height="2" fill="#72b7bd"/><rect x="8" y="64" width="2" height="2" fill="#559aa0"/><rect x="10" y="64" width="2" height="2" fill="#80c5cb"/><rect x="12" y="64" width="2" height="2" fill="#84c9cf"/><rect x="14" y="64" width="2" height="2" fill="#63a8ae"/><rect x="16" y="64" width="2" height="2" fill="#63a8ae"/><rect x="18" y="64" width="2" height="2" fill="#74b9bf"/><rect x="20" y="64" width="2" height="2" fill="#85cad0"/><rect x="22" y="64" width="2" height="2" fill="#6aafb5"/><rect x="24" y="64" width="2" height="2" fill="#6db2b8"/><rect x="26" y="64" width="2" height="2" fill="#559aa0"/><rect x="28" y="64" width="2" height="2" fill="#5ba0a6"/><rect x="30" y="64" width="2" height="2" fill="#5ea3a9"/><rect x="32" y="64" width="2" height="2" fill="#6aafb5"/><rect x="34" y="64" width="2" height="2" fill="#5ca1a7"/><rect x="36" y="64" width="2" height="2" fill="#6eb3b9"/><rect x="0" y="66" width="2" height="2" fill="#81c7cd"/><rect x="2" y="66" width="2" height="2" fill="#75bbc1"/><rect x="4" y="66" width="2" height="2" fill="#70b6bc"/><rect x="6" y="66" width="2" height="2" fill="#52989e"/><rect x="8" y="66" width="2" height="2" fill="#86ccd2"/><rect x="10" y="66" width="2" height="2" fill="#71b7bd"/><rect x="12" y="66" width="2" height="2" fill="#78bec4"/><rect x="14" y="66" width="2" height="2" fill="#64aab0"/><rect x="16" y="66" width="2" height="2" fill="#87cdd3"/><rect x="18" y="66" width="2" height="2" fill="#5ea4aa"/><rect x="20" y="66" width="2" height="2" fill="#5ea4aa"/><rect x="22" y="66" width="2" height="2" fill="#599fa5"/><rect x="24" y="66" width="2" height="2" fill="#6bb1b7"/><rect x="26" y="66" width="2" height="2" fill="#53999f"/><rect x="28" y="66" width="2" height="2" fill="#599fa5"/><rect x="30" y="66" width="2" height="2" fill="#80c6cc"/><rect x="32" y="66" width="2" height="2" fill="#70b6bc"/><rect x="34" y="66" width="2" height="2" fill="#6fb5bb"/><rect x="36" y="66" width="2" height="2" fill="#8cd2d8"/></svg>
<div class="a" style="left:324px;top:197px;width:72px;height:18px;border-radius:2px;background:rgba(30,30,30,0.75)"></div>
<svg style="left:327px;top:199px" width="13" height="14" viewBox="0 0 13 14">
  <rect x="0.75" y="0.75" width="11.5" height="12.5" rx="1" fill="none" stroke="#f0f0f0" stroke-width="1.5"/>
  <path d="M3.5 0.8 V13.2 M9.5 0.8 V13.2 M0.8 4.5 H3.5 M0.8 9.5 H3.5 M9.5 4.5 H12.2 M9.5 9.5 H12.2 M3.5 7 H9.5" stroke="#f0f0f0" stroke-width="1.3"/>
</svg>
<div class="t g" style="left:347px;top:201px;color:#e4e4e4"><i style="width:7px">0</i><i style="width:7px">0</i><i style="width:3px">:</i><i style="width:7px">0</i><i style="width:7px">0</i><i style="width:3px">:</i><i style="width:7px">0</i><i style="width:7px">7</i></div>
<div class="a" style="left:423px;top:197px;width:20px;height:20px;border-radius:3px;background:#e0352c"></div>
<div class="a" style="left:428px;top:206px;width:10px;height:2px;background:#fff"></div>
<div class="a" style="left:432px;top:202px;width:2px;height:10px;background:#fff"></div>
<div class="a" style="left:412px;top:191px;width:42px;height:36px;border:3px solid #f21c0e;border-radius:2px"></div>
<svg style="left:377px;top:233px" width="12" height="12" viewBox="0 0 12 12">
  <path d="M1 0.8 L2 1.8 M0.2 3.6 L1.4 4.6 M0.6 11 L2.4 7" stroke="#d4d4d4" stroke-width="1.1" fill="none" stroke-linecap="round"/>
  <path d="M5.3 0.2 L3.6 3.6 M4.6 1.5 H11.5 M3.8 4.3 V8.8 M3.8 4.3 H10.5 V10.6 Q10.5 11.4 9.6 11.4 H8.2 M2.4 6.3 H11.9 M3.8 8.6 H10.5 M6.8 4.8 L7.3 5.6 M6.8 7 L7.3 7.9" stroke="#d4d4d4" stroke-width="1.05" fill="none"/>
</svg>

<!-- ========== PLAYER PANEL ========== -->
<div class="a" style="left:494px;top:34px;width:516px;height:64px;background:#333333;border-radius:6px 6px 0 0"></div>
<div class="a" style="left:494px;top:98px;width:516px;height:2px;background:#161616"></div>
<div class="a" style="left:494px;top:100px;width:516px;height:348px;background:#222222"></div>
<div class="t g" style="left:502px;top:60px;color:#f0f0f0"><i style="width:8px">P</i><i style="width:3px">l</i><i style="width:7px">a</i><i style="width:6px">y</i><i style="width:7px">e</i><i style="width:4px">r</i></div>
<svg style="left:916px;top:58px" width="16" height="16" viewBox="0 0 16 16">
  <path d="M8 11 V1.8 M4.6 5 L8 1.6 L11.4 5" stroke="#8a8a8a" stroke-width="1.8" fill="none" stroke-linejoin="round"/>
  <path d="M0.9 9.5 V13.8 Q0.9 15.1 2.2 15.1 H13.8 Q15.1 15.1 15.1 13.8 V9.5" stroke="#8a8a8a" stroke-width="1.8" fill="none"/>
</svg>
<div class="t g" style="left:940px;top:60px;color:#8a8a8a"><i style="width:8px">E</i><i style="width:6px">x</i><i style="width:7px">p</i><i style="width:7px">o</i><i style="width:4px">r</i><i style="width:3px">t</i></div>
<div class="a" style="left:520px;top:110px;width:464px;height:261px;background:#000"></div>
<!-- progress -->
<div class="a" style="left:507px;top:392px;width:314px;height:4px;background:#333"></div>
<div class="a" style="left:501px;top:388px;width:12px;height:12px;border-radius:50%;background:#707070"></div>
<div class="t g" style="left:839px;top:388px;font-size:14px;line-height:14px;color:#983a32"><i style="width:8px">0</i><i style="width:8px">0</i><i style="width:4px">:</i><i style="width:8px">0</i><i style="width:8px">0</i><i style="width:4px">:</i><i style="width:8px">0</i><i style="width:8px">0</i><i style="width:4px">:</i><i style="width:8px">0</i><i style="width:8px">0</i></div><div class="t g" style="left:915px;top:388px;font-size:14px;line-height:14px;color:#8c8c8c"><i style="width:4px">&nbsp;</i><i style="width:4px">/</i><i style="width:4px">&nbsp;</i><i style="width:8px">0</i><i style="width:8px">0</i><i style="width:4px">:</i><i style="width:8px">0</i><i style="width:8px">0</i><i style="width:4px">:</i><i style="width:8px">0</i><i style="width:8px">0</i><i style="width:4px">:</i><i style="width:8px">0</i><i style="width:8px">0</i></div>
<!-- controls -->
<svg style="left:508px;top:420px" width="12" height="13" viewBox="0 0 12 13"><path d="M0 0 L11.5 6.5 L0 13 Z" fill="#808080"/></svg>
<svg style="left:541px;top:420px" width="14" height="13" viewBox="0 0 14 13"><rect x="0" y="0" width="1.6" height="13" fill="#808080"/><path d="M13.5 0 V13 L2.5 6.5 Z" fill="#808080"/></svg>
<svg style="left:575px;top:420px" width="14" height="13" viewBox="0 0 14 13"><rect x="12.4" y="0" width="1.6" height="13" fill="#808080"/><path d="M0.5 0 V13 L11.5 6.5 Z" fill="#808080"/></svg>
<div class="a" style="left:607px;top:420px;width:13px;height:13px;border-radius:2px;background:#808080"></div>
<svg style="left:638px;top:419px" width="18" height="16" viewBox="0 0 18 16">
  <rect x="0" y="4.2" width="4" height="7" rx="0.8" fill="#808080"/>
  <path d="M5 3 L11 0 V15 L5 11.6 Z" fill="#808080"/>
  <path d="M12.4 5.8 Q14 7.5 12.4 9.4 M14.4 3.5 Q17.4 7.5 14.4 11.5" stroke="#808080" stroke-width="1.2" fill="none"/>
</svg>
<div class="a" style="left:666px;top:424px;width:94px;height:3px;border-radius:2px;background:#7a7a7a"></div>
<div class="a" style="left:754px;top:420px;width:12px;height:12px;border-radius:50%;background:#7a7a7a"></div>
<div class="a" style="left:886px;top:414px;width:88px;height:24px;border-radius:4px;background:#2c2c2c"></div>
<div class="t g" style="left:898px;top:420px;color:#7c7c7c"><i style="width:7px">1</i><i style="width:7px">6</i><i style="width:3px">:</i><i style="width:7px">9</i></div>
<svg style="left:954px;top:422px" width="12" height="8" viewBox="0 0 12 8"><path d="M1 1 L6 6 L11 1" stroke="#8a8a8a" stroke-width="1.8" fill="none"/></svg>
<svg style="left:985px;top:420px" width="13" height="13" viewBox="0 0 13 13">
  <path d="M0.75 4 V0.75 H4 M9 0.75 H12.25 V4 M12.25 9 V12.25 H9 M4 12.25 H0.75 V9" stroke="#8a8a8a" stroke-width="1.5" fill="none"/>
  <rect x="3" y="3.5" width="7" height="6" rx="0.5" fill="#8a8a8a"/>
</svg>

<!-- ========== PROJECT INFO ========== -->
<div class="a" style="left:1014px;top:34px;width:302px;height:64px;background:#333333;border-radius:6px 0 0 0"></div>
<div class="a" style="left:1014px;top:98px;width:302px;height:2px;background:#161616"></div>
<div class="a" style="left:1014px;top:100px;width:302px;height:348px;background:#222222"></div>
<div class="t g" style="left:1030px;top:60px;color:#f0f0f0"><i style="width:8px">P</i><i style="width:4px">r</i><i style="width:7px">o</i><i style="width:3px">j</i><i style="width:7px">e</i><i style="width:6px">c</i><i style="width:3px">t</i><i style="width:3px">&nbsp;</i><i style="width:3px">I</i><i style="width:7px">n</i><i style="width:3px">f</i><i style="width:7px">o</i></div>
<div class="a" style="left:1016px;top:197px;width:10px;height:88px;border-radius:0 5px 5px 0;background:#2c2c2c"></div>
<svg style="left:1018px;top:237px" width="6" height="8" viewBox="0 0 6 8"><path d="M1 0.8 L4.3 4 L1 7.2" stroke="#c8c8c8" stroke-width="1.5" fill="none"/></svg>
<div class="t g" style="left:1034px;top:110px"><i style="width:8px">P</i><i style="width:4px">r</i><i style="width:7px">o</i><i style="width:3px">j</i><i style="width:7px">e</i><i style="width:6px">c</i><i style="width:3px">t</i><i style="width:3px">&nbsp;</i><i style="width:9px">N</i><i style="width:7px">a</i><i style="width:10px">m</i><i style="width:7px">e</i><i style="width:3px">:</i></div>
<div class="t g" style="left:1034px;top:140px"><i style="width:8px">P</i><i style="width:4px">r</i><i style="width:7px">o</i><i style="width:3px">j</i><i style="width:7px">e</i><i style="width:6px">c</i><i style="width:3px">t</i><i style="width:3px">&nbsp;</i><i style="width:7px">F</i><i style="width:3px">i</i><i style="width:3px">l</i><i style="width:7px">e</i><i style="width:6px">s</i><i style="width:3px">&nbsp;</i><i style="width:7px">L</i><i style="width:7px">o</i><i style="width:6px">c</i><i style="width:7px">a</i><i style="width:3px">t</i><i style="width:3px">i</i><i style="width:7px">o</i><i style="width:7px">n</i><i style="width:3px">:</i></div>
<div class="t g" style="left:1034px;top:170px"><i style="width:9px">R</i><i style="width:7px">e</i><i style="width:6px">s</i><i style="width:7px">o</i><i style="width:3px">l</i><i style="width:7px">u</i><i style="width:3px">t</i><i style="width:3px">i</i><i style="width:7px">o</i><i style="width:7px">n</i><i style="width:3px">:</i></div>
<div class="t g" style="left:1034px;top:200px"><i style="width:7px">F</i><i style="width:4px">r</i><i style="width:7px">a</i><i style="width:10px">m</i><i style="width:7px">e</i><i style="width:3px">&nbsp;</i><i style="width:9px">R</i><i style="width:7px">a</i><i style="width:3px">t</i><i style="width:7px">e</i><i style="width:3px">:</i></div>
<div class="t g" style="left:1034px;top:230px"><i style="width:9px">C</i><i style="width:7px">o</i><i style="width:3px">l</i><i style="width:7px">o</i><i style="width:4px">r</i><i style="width:3px">&nbsp;</i><i style="width:8px">S</i><i style="width:7px">p</i><i style="width:7px">a</i><i style="width:6px">c</i><i style="width:7px">e</i><i style="width:3px">:</i></div>
<div class="t g" style="left:1034px;top:260px"><i style="width:9px">D</i><i style="width:7px">u</i><i style="width:4px">r</i><i style="width:7px">a</i><i style="width:3px">t</i><i style="width:3px">i</i><i style="width:7px">o</i><i style="width:7px">n</i><i style="width:3px">:</i></div>
<div class="t g" style="left:1174px;top:110px"><i style="width:9px">U</i><i style="width:7px">n</i><i style="width:3px">t</i><i style="width:3px">i</i><i style="width:3px">t</i><i style="width:3px">l</i><i style="width:7px">e</i><i style="width:7px">d</i></div>
<div class="t g" style="left:1174px;top:140px"><i style="width:9px">C</i><i style="width:3px">:</i><i style="width:3px">\</i><i style="width:9px">U</i><i style="width:6px">s</i><i style="width:7px">e</i><i style="width:4px">r</i><i style="width:6px">s</i><i style="width:3px">\</i><i style="width:3px">l</i><i style="width:3px">i</i><i style="width:6px">z</i><i style="width:3px">l</i><i style="width:7px">u</i><i style="width:3px">\</i><i style="width:8px">A</i><i style="width:7px">p</i><i style="width:7px">p</i><i style="width:9px">D</i><i style="width:3px">.</i><i style="width:3px">.</i><i style="width:3px">.</i></div>
<div class="t g" style="left:1174px;top:170px"><i style="width:7px">1</i><i style="width:7px">9</i><i style="width:7px">2</i><i style="width:7px">0</i><i style="width:6px">x</i><i style="width:7px">1</i><i style="width:7px">0</i><i style="width:7px">8</i><i style="width:7px">0</i></div>
<div class="t g" style="left:1174px;top:200px"><i style="width:7px">2</i><i style="width:7px">5</i><i style="width:3px">f</i><i style="width:7px">p</i><i style="width:6px">s</i></div>
<div class="t g" style="left:1174px;top:230px"><i style="width:8px">S</i><i style="width:9px">D</i><i style="width:9px">R</i><i style="width:4px">-</i><i style="width:3px">&nbsp;</i><i style="width:9px">R</i><i style="width:7px">e</i><i style="width:6px">c</i><i style="width:3px">.</i><i style="width:7px">7</i><i style="width:7px">0</i><i style="width:7px">9</i></div>
<div class="t g" style="left:1174px;top:260px"><i style="width:7px">0</i><i style="width:7px">0</i><i style="width:3px">:</i><i style="width:7px">0</i><i style="width:7px">0</i><i style="width:3px">:</i><i style="width:7px">0</i><i style="width:7px">0</i><i style="width:3px">:</i><i style="width:7px">0</i><i style="width:7px">0</i></div>

<!-- ========== TIMELINE ========== -->
<div class="a" style="left:10px;top:452px;width:1306px;height:40px;background:#333333"></div>
<div class="a" style="left:10px;top:492px;width:1306px;height:2px;background:#161616"></div>
<div class="a" style="left:10px;top:494px;width:1306px;height:261px;background:#1c1c1c"></div>
<div class="a" style="left:10px;top:494px;width:88px;height:261px;background:#222222"></div>
<div class="a" style="left:10px;top:544px;width:88px;height:40px;background:#282828"></div>
<div class="a" style="left:10px;top:672px;width:88px;height:47px;background:#282828"></div>
<div class="a" style="left:1308px;top:494px;width:8px;height:253px;background:#212121"></div>
<div class="a" style="left:98px;top:747px;width:1218px;height:8px;background:#222222"></div>
<div class="a" style="left:98px;top:747px;width:812px;height:8px;border-radius:4px;background:#7a7a7a"></div>
<div class="a" style="left:1308px;top:545px;width:8px;height:184px;border-radius:4px;background:#7a7a7a"></div>
<!-- toolbar icons -->
<svg style="left:40px;top:465px" width="18" height="15" viewBox="0 0 18 15">
  <path d="M0.6 7.2 L6.8 0.6 V4 Q14.8 4.6 17 13.6 Q13.5 9.8 6.8 10.2 V13.9 Z" fill="#8a8a8a" stroke="#8a8a8a" stroke-width="0.6" stroke-linejoin="round"/>
</svg>
<svg style="left:95px;top:465px" width="18" height="15" viewBox="0 0 18 15">
  <path d="M16.4 7.2 L10.2 0.6 V4 Q2.2 4.6 0 13.6 Q3.5 9.8 10.2 10.2 V13.9 Z" fill="#8a8a8a" stroke="#8a8a8a" stroke-width="0.6" stroke-linejoin="round"/>
</svg>
<svg style="left:149px;top:464px" width="16" height="16" viewBox="0 0 16 16">
  <path d="M4 0.6 H12" stroke="#8a8a8a" stroke-width="1.1"/>
  <rect x="0" y="3" width="16" height="1.8" fill="#8a8a8a"/>
  <rect x="1.9" y="4.7" width="12.4" height="11.3" fill="#8a8a8a"/>
  <rect x="4.8" y="6.8" width="1.9" height="7.2" fill="#333"/>
  <rect x="9" y="6.8" width="1.9" height="7.2" fill="#333"/>
</svg>
<svg style="left:203px;top:464px" width="16" height="16" viewBox="0 0 16 16">
  <path d="M3.6 0.4 L11.4 12" stroke="#8a8a8a" stroke-width="1.6"/>
  <path d="M12.4 0.4 L9.1 5.2 M7.4 7.8 L4.6 11.8" stroke="#8a8a8a" stroke-width="1.6"/>
  <circle cx="3.9" cy="13.1" r="2.2" fill="none" stroke="#8a8a8a" stroke-width="1.5"/>
  <circle cx="12" cy="13.1" r="2.2" fill="none" stroke="#8a8a8a" stroke-width="1.5"/>
</svg>
<svg style="left:257px;top:464px" width="16" height="16" viewBox="0 0 16 16">
  <path d="M4.2 0 V11.8 H16 M0 4.2 H11.7 V16" stroke="#8a8a8a" stroke-width="1.7" fill="none"/>
</svg>
<!-- right toolbar -->
<svg style="left:1055px;top:465px" width="13" height="12" viewBox="0 0 13 12">
  <rect x="0" y="0" width="11" height="4.6" rx="0.8" fill="#8a8a8a"/>
  <rect x="0" y="6.6" width="13" height="5.4" rx="0.8" fill="#8a8a8a"/>
  <rect x="4.1" y="2" width="3.1" height="7.8" rx="1.5" fill="#8a8a8a" stroke="#333" stroke-width="1"/>
</svg>
<svg style="left:1090px;top:464px" width="15" height="15" viewBox="0 0 15 15">
  <rect x="1" y="4.8" width="6" height="5.2" rx="0.6" fill="#8a8a8a"/><rect x="8" y="4.8" width="6" height="5.2" rx="0.6" fill="#8a8a8a"/>
  <path d="M7.5 1 V3 M7.5 12 V14 M4.2 2 L5.5 3.3 M10.8 2 L9.5 3.3 M4.2 13 L5.5 11.7 M10.8 13 L9.5 11.7" stroke="#8a8a8a" stroke-width="1"/>
</svg>
<svg style="left:1123px;top:464px" width="15" height="14" viewBox="0 0 15 14">
  <rect x="4.5" y="1" width="6.5" height="12.2" rx="2.5" fill="#8a8a8a"/>
  <rect x="1" y="3.7" width="2" height="6.8" rx="0.5" fill="#8a8a8a"/><rect x="12.2" y="3.7" width="2" height="6.8" rx="0.5" fill="#8a8a8a"/>
</svg>
<svg style="left:1163px;top:465px" width="13" height="13" viewBox="0 0 13 13">
  <circle cx="6.5" cy="6.5" r="6.5" fill="#8a8a8a"/><rect x="3" y="5.6" width="7" height="1.8" fill="#333"/>
</svg>
<div class="a" style="left:1185px;top:470px;width:83px;height:3px;border-radius:2px;background:#2a2a2a"></div>
<div class="a" style="left:1185px;top:470px;width:36px;height:3px;border-radius:2px;background:#7a7a7a"></div>
<div class="a" style="left:1215px;top:466px;width:12px;height:12px;border-radius:50%;background:#7a7a7a"></div>
<svg style="left:1281px;top:465px" width="13" height="13" viewBox="0 0 13 13">
  <circle cx="6.5" cy="6.5" r="6.5" fill="#8a8a8a"/><rect x="3" y="5.6" width="7" height="1.8" fill="#333"/><rect x="5.6" y="3" width="1.8" height="7" fill="#333"/>
</svg>
<!-- track header icons -->
<svg style="left:30px;top:511px" width="16" height="16" viewBox="0 0 16 16">
  <path d="M1 12.5 V2.5 Q1 1 2.5 1 H12" stroke="#8a8a8a" stroke-width="2" fill="none"/>
  <rect x="3.5" y="3.5" width="12.5" height="12.5" rx="1.5" fill="#8a8a8a"/>
  <path d="M6.3 9.75 H13.2 M9.75 6.3 V13.2" stroke="#222" stroke-width="1.7"/>
</svg>
<svg style="left:62px;top:511px" width="16" height="16" viewBox="0 0 16 16">
  <path d="M1 12.5 V2.5 Q1 1 2.5 1 H12" stroke="#8a8a8a" stroke-width="2" fill="none"/>
  <rect x="3.5" y="3.5" width="12.5" height="12.5" rx="1.5" fill="#8a8a8a"/>
  <path d="M6.3 9.75 H13.2" stroke="#222" stroke-width="1.7"/>
</svg>
<svg style="left:24px;top:622px" width="12" height="12" viewBox="0 0 12 12">
  <rect x="0.5" y="0.5" width="11" height="11" fill="none" stroke="#5e5e5e" stroke-width="1"/>
  <path d="M3 0.5 V11.5 M9 0.5 V11.5 M0.5 4 H3 M0.5 8 H3 M9 4 H11.5 M9 8 H11.5 M3 6 H9" stroke="#5e5e5e" stroke-width="1"/>
</svg>
<svg style="left:62px;top:622px" width="10" height="12" viewBox="0 0 10 12">
  <path d="M2.3 5.5 V3.2 Q2.3 0.8 4.8 0.8 Q7 0.8 7.3 3" stroke="#5e5e5e" stroke-width="1.3" fill="none"/>
  <rect x="0.5" y="5.5" width="9" height="6.5" rx="0.8" fill="#5e5e5e"/><rect x="4.3" y="7.5" width="1.4" height="2.5" fill="#282828"/>
</svg>
<svg style="left:24px;top:690px" width="12" height="12" viewBox="0 0 12 12">
  <path d="M3.4 10 V2.2 L11 0.8 V8.8" stroke="#5e5e5e" stroke-width="1.3" fill="none"/>
  <path d="M3.4 3.6 L11 2.2" stroke="#5e5e5e" stroke-width="1" fill="none"/>
  <circle cx="2" cy="10" r="1.9" fill="#5e5e5e"/>
  <circle cx="9.6" cy="8.8" r="1.9" fill="#5e5e5e"/>
</svg>
<svg style="left:62px;top:690px" width="10" height="12" viewBox="0 0 10 12">
  <path d="M2.3 5.5 V3.2 Q2.3 0.8 4.8 0.8 Q7 0.8 7.3 3" stroke="#5e5e5e" stroke-width="1.3" fill="none"/>
  <rect x="0.5" y="5.5" width="9" height="6.5" rx="0.8" fill="#5e5e5e"/><rect x="4.3" y="7.5" width="1.4" height="2.5" fill="#282828"/>
</svg>
<!-- drop zone -->
<svg style="left:359px;top:579px" width="689" height="82" viewBox="0 0 689 82">
  <rect x="1" y="1" width="687" height="80" rx="4" fill="none" stroke="#7a7a7a" stroke-width="2" stroke-dasharray="4 4"/>
</svg>
<svg style="left:641px;top:544px" width="124" height="70" viewBox="0 0 124 70">
  <defs><clipPath id="cp"><rect x="0" y="0" width="124" height="70" rx="4"/></clipPath></defs>
  <g clip-path="url(#cp)">
    <rect x="0" y="0" width="124" height="70" fill="#595959"/>
    <path d="M0 36 L40 19 L109 70 L0 70 Z" fill="#8f8f8f"/>
    <path d="M48 70 L102 29 L124 46 L124 70 Z" fill="#7b7b7b"/>
    <path d="M48 70 L78.5 46.5 L109 70 Z" fill="#a6a6a6"/>
    <circle cx="109" cy="13" r="6" fill="#a6a6a6"/>
  </g>
</svg>
<div class="t g" style="left:356px;top:672px;width:689px;text-align:center;font-size:14px;line-height:14px;color:#d8d8d8"><i style="width:10px">D</i><i style="width:5px">r</i><i style="width:8px">a</i><i style="width:8px">g</i><i style="width:4px">&nbsp;</i><i style="width:8px">a</i><i style="width:8px">n</i><i style="width:8px">d</i><i style="width:4px">&nbsp;</i><i style="width:8px">d</i><i style="width:5px">r</i><i style="width:8px">o</i><i style="width:8px">p</i><i style="width:4px">&nbsp;</i><i style="width:12px">m</i><i style="width:8px">a</i><i style="width:4px">t</i><i style="width:8px">e</i><i style="width:5px">r</i><i style="width:3px">i</i><i style="width:8px">a</i><i style="width:3px">l</i><i style="width:7px">s</i><i style="width:4px">&nbsp;</i><i style="width:8px">h</i><i style="width:8px">e</i><i style="width:5px">r</i><i style="width:8px">e</i><i style="width:4px">&nbsp;</i><i style="width:4px">t</i><i style="width:8px">o</i><i style="width:4px">&nbsp;</i><i style="width:7px">s</i><i style="width:4px">t</i><i style="width:8px">a</i><i style="width:5px">r</i><i style="width:4px">t</i><i style="width:4px">&nbsp;</i><i style="width:7px">c</i><i style="width:5px">r</i><i style="width:8px">e</i><i style="width:8px">a</i><i style="width:4px">t</i><i style="width:3px">i</i><i style="width:8px">n</i><i style="width:8px">g</i><i style="width:4px">&nbsp;</i><i style="width:7px">y</i><i style="width:8px">o</i><i style="width:8px">u</i><i style="width:5px">r</i><i style="width:4px">&nbsp;</i><i style="width:7px">v</i><i style="width:3px">i</i><i style="width:8px">d</i><i style="width:8px">e</i><i style="width:8px">o</i><i style="width:4px">.</i></div>
<!-- playhead -->
<div class="a" style="left:98px;top:494px;width:1px;height:253px;background:#e84848"></div>
<svg style="left:98px;top:494px" width="8" height="16" viewBox="0 0 8 16"><path d="M0 0 H7 V9 L0 15.5 Z" fill="#f04848"/></svg>
</body></html>
